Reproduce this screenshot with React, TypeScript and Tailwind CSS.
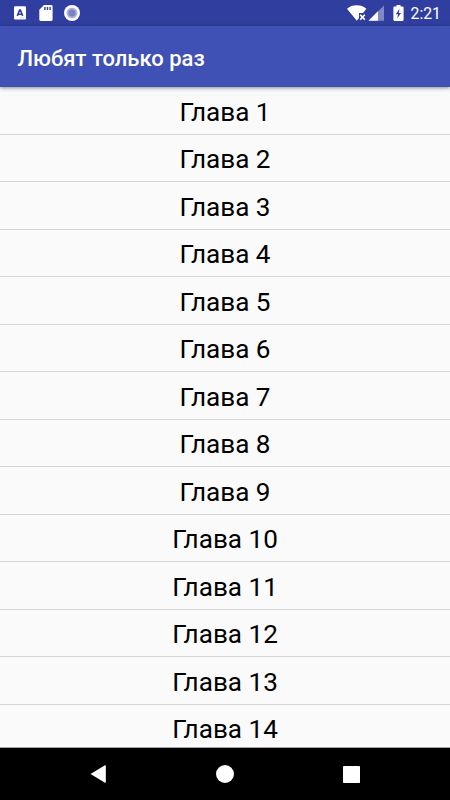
const chapters = Array.from({ length: 14 }, (_, i) => `Глава ${i + 1}`);

function StatusBar() {
  return (
    <div className="flex h-[26px] shrink-0 items-center justify-between bg-[#303f9f] pl-[13px] pr-[9px] text-white">
      <div className="flex items-center">
        {/* Keyboard notification */}
        <svg width="14" height="14" viewBox="0 0 14 14">
          <rect x="1" y="0.3" width="12" height="13.2" rx="1.2" fill="#fff" />
          <path
            d="M4.3 10 6.6 4h.8l2.3 6M5.1 8.2h3.8"
            fill="none"
            stroke="#303f9f"
            strokeWidth="1.6"
          />
          <path d="M7 12h4.5" stroke="#b4bbe0" strokeDasharray="1 .6" />
        </svg>
        {/* SD card */}
        <svg className="ml-3" width="14" height="16" viewBox="0 0 14 16">
          <path
            d="M5 0h7.2c.8 0 1.4.6 1.4 1.4v13.2c0 .8-.6 1.4-1.4 1.4H1.7C.9 16 .3 15.4.3 14.6V4.8z"
            fill="#fff"
          />
          <path
            d="M5.9 2v3.1M8.5 2v3.1M11.1 2v3.1"
            stroke="#303f9f"
            strokeWidth="1.4"
          />
        </svg>
        {/* Sync ring */}
        <svg className="ml-[11px]" width="16" height="16" viewBox="0 0 16 16">
          <circle cx="8" cy="8" r="8" fill="#fff" />
          <circle cx="8" cy="8" r="5.4" fill="#aab1dc" />
          <circle cx="8" cy="8" r="3.6" fill="#7a84c4" />
        </svg>
      </div>

      <div className="flex items-center">
        {/* Wifi without connection */}
        <svg width="20" height="16" viewBox="0 0 20 16">
          <path
            d="M0 3.7C5.2-.8 14.2-.8 19.4 3.7L16.1 7.9H12v5.2l-2.2 2.6z"
            fill="#fff"
          />
          <path
            d="m13.2 9.8 4.6 4.8m0-4.8-4.6 4.8"
            stroke="#fff"
            strokeWidth="1.6"
          />
        </svg>
        {/* Cell signal */}
        <svg className="ml-px" width="16" height="16" viewBox="0 0 16 16">
          <path d="M.5 15.8 16 .4v15.4z" fill="#8089c5" />
          <path d="M.5 15.8 10 6.2v9.6z" fill="#fff" />
        </svg>
        {/* Charging battery */}
        <svg className="ml-[9px]" width="11" height="16" viewBox="0 0 11 16">
          <path
            d="M3.5 0h4v1.5h2c.6 0 1.1.5 1.1 1.1v12.2c0 .6-.5 1.1-1.1 1.1h-8c-.6 0-1.1-.5-1.1-1.1V2.6c0-.6.5-1.1 1.1-1.1h2z"
            fill="#fff"
          />
          <path d="M6.5 3.8 2.8 9.2h2.3l-.9 4.2L8 7.9H5.8z" fill="#303f9f" />
        </svg>
        <span className="ml-[7px] pt-[2px] text-[15.8px] leading-6 font-normal">
          2:21
        </span>
      </div>
    </div>
  );
}

function NavigationBar() {
  return (
    <div className="z-10 flex h-[53px] shrink-0 items-center justify-between border-t border-[#a5a5a5] bg-black px-[90px]">
      <svg width="16" height="18" viewBox="0 0 16 18">
        <path d="M.5 9 15 .3q.8-.3.8.5v16.4q0 .8-.8.5z" fill="#fff" />
      </svg>
      <svg width="18" height="18" viewBox="0 0 18 18">
        <circle cx="9" cy="9" r="9" fill="#fff" />
      </svg>
      <svg width="17" height="17" viewBox="0 0 17 17">
        <rect width="17" height="17" rx="0.8" fill="#fff" />
      </svg>
    </div>
  );
}

export default function App() {
  return (
    <div className="flex h-[800px] w-[450px] flex-col overflow-hidden bg-[#fafafa] font-[Roboto,sans-serif]">
      <StatusBar />
      <header className="z-10 flex h-[61px] shrink-0 items-center bg-[#3f51b5] pt-1 pl-[17.5px] shadow-[0_1px_4px_rgba(0,0,0,0.45)]">
        <h1 className="text-[22px] leading-none font-medium text-white">
          Любят только раз
        </h1>
      </header>
      <ul className="min-h-0 flex-1 overflow-hidden">
        {chapters.map((chapter) => (
          <li
            key={chapter}
            className="flex h-[47.5px] items-center justify-center border-b border-[#d5d5d5] pt-[3px] text-[26.1px] leading-none text-black"
          >
            {chapter}
          </li>
        ))}
      </ul>
      <NavigationBar />
    </div>
  );
}
